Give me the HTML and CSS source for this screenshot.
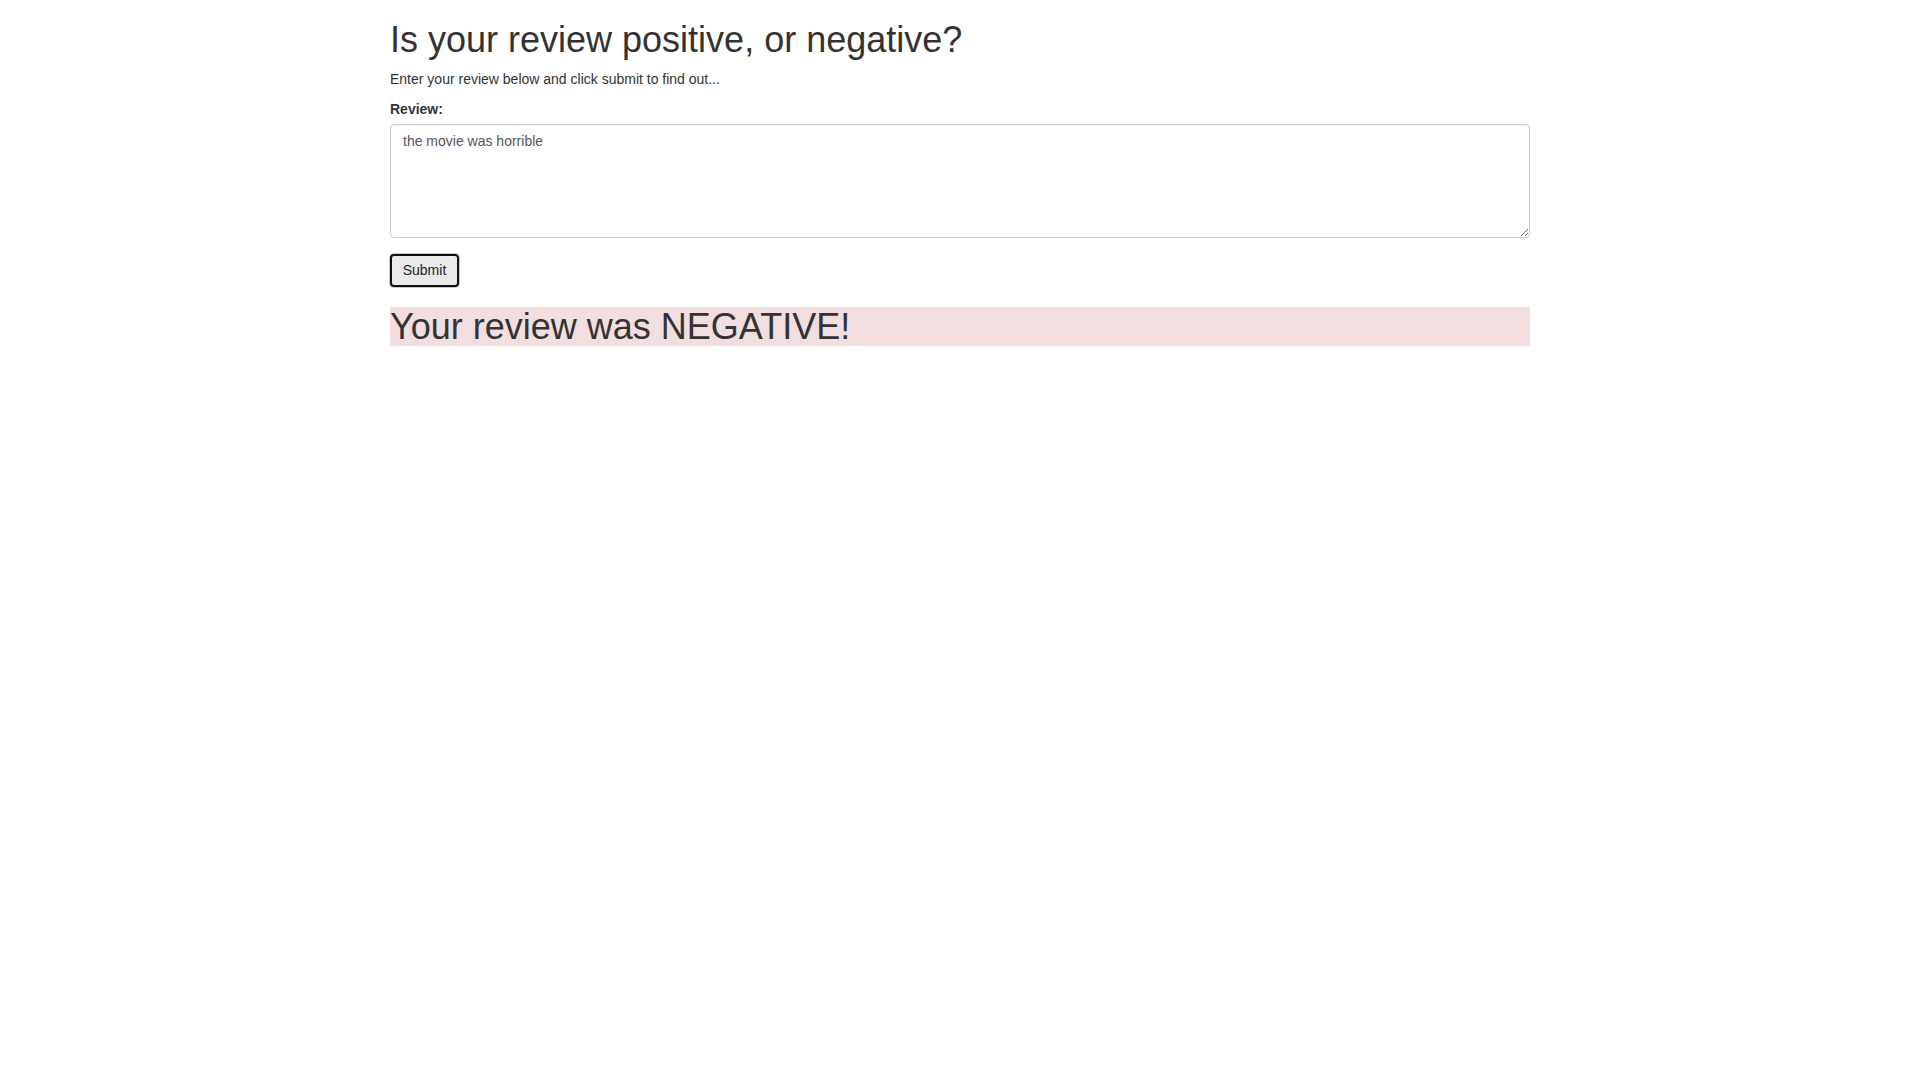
FILE: index.html
```html
<!DOCTYPE html>
<html>
<head>
<meta charset="utf-8">
<title>Review Sentiment</title>
<link rel="stylesheet" href="styles.css">
</head>
<body>
<div class="container">
  <h1 class="title">Is your review positive, or negative?</h1>
  <p class="intro">Enter your review below and click submit to find out...</p>
  <form class="review-form">
    <div class="form-group">
      <label class="label" for="review">Review:</label>
      <textarea id="review" class="form-control" rows="5">the movie was horrible</textarea>
    </div>
    <button type="button" class="btn-submit">Submit</button>
  </form>
  <h1 class="result">Your review was NEGATIVE!</h1>
</div>
</body>
</html>
```
FILE: styles.css
```css
* { box-sizing: border-box; }
html, body { margin: 0; padding: 0; background: #fff; }
body {
  font-family: "Liberation Sans", Arial, Helvetica, sans-serif;
  font-size: 14px;
  line-height: 1.42857143;
  color: #333;
}
.container {
  width: 1170px;
  margin: 0 auto;
  padding: 0 15px;
}
.title {
  font-size: 36px;
  font-weight: 500;
  line-height: 1.1;
  margin: 20px 0 9px;
}
.intro { margin: 0 0 10px; }
.review-form { margin: 0; }
.form-group { margin-bottom: 16px; }
.label {
  display: inline-block;
  font-weight: bold;
  margin-bottom: 5px;
}
.form-control {
  display: block;
  width: 100%;
  height: 114px;
  padding: 6px 12px;
  font-family: inherit;
  font-size: 14px;
  line-height: 1.42857143;
  color: #555;
  background: #fff;
  border: 1px solid #ccc;
  border-radius: 4px;
  box-shadow: inset 0 1px 1px rgba(0,0,0,.075);
  resize: vertical;
  margin: 0;
}
.btn-submit {
  display: block;
  width: 69px;
  height: 33px;
  padding: 0;
  font-family: inherit;
  font-size: 14px;
  color: #222;
  background: #e9e9e9;
  border: 2px solid #101010;
  border-radius: 4px;
  box-shadow: 0 0 0 1px #c8c8c8;
  margin: 0;
}
.result {
  font-size: 36px;
  font-weight: 500;
  line-height: 1.1;
  margin: 20px 0 10px;
  background: #f2dede;
}
```
